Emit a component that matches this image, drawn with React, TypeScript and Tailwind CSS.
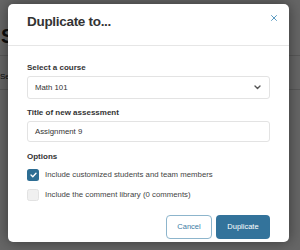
import { X } from "lucide-react";

const DuplicateDialog = () => {
  return (
    <div className="absolute left-[8px] top-[4px] flex h-[238px] w-[281px] flex-col rounded-[5px] bg-white shadow-[0_0_14px_rgba(0,0,0,0.45)]">
      {/* Header */}
      <div className="relative h-[42px] border-b border-[#e6e6e6] pl-[19px] pt-[10px]">
        <h2 className="text-[13.5px] font-bold leading-[16px] tracking-[-0.3px] text-[#333]">
          Duplicate to...
        </h2>
        <button
          aria-label="Close"
          className="absolute right-[10px] top-[9px] text-[#3a87b4]"
        >
          <X size={10} strokeWidth={2} />
        </button>
      </div>

      {/* Body */}
      <div className="flex flex-1 flex-col px-[19px] pt-[17px] text-[#333]">
        <label className="text-[8px] font-bold leading-[10px]">
          Select a course
        </label>
        <div className="mt-[3px] flex h-[23px] items-center justify-between rounded-[3px] border border-[#e3e3e3] pl-[7px] pr-[8px]">
          <span className="text-[7.8px]">Math 101</span>
          <svg width="7" height="5" viewBox="0 0 7 5" fill="none">
            <path
              d="M1 1l2.5 2.5L6 1"
              stroke="#555"
              strokeWidth="1.4"
              strokeLinecap="round"
              strokeLinejoin="round"
            />
          </svg>
        </div>

        <label className="mt-[9px] text-[8px] font-bold leading-[10px]">
          Title of new assessment
        </label>
        <div className="mt-[3px] flex h-[21px] items-center rounded-[3px] border border-[#e3e3e3] pl-[7px]">
          <span className="text-[7.8px]">Assignment 9</span>
        </div>

        <p className="mt-[10px] text-[8px] font-bold leading-[10px]">Options</p>

        <div className="mt-[7px] flex items-center gap-[6px]">
          <span className="flex h-[12px] w-[12px] items-center justify-center rounded-[2.5px] bg-[#2d6d93]">
            <svg width="7" height="6" viewBox="0 0 7 6" fill="none">
              <path
                d="M1 3l1.8 1.8L6 1.3"
                stroke="white"
                strokeWidth="1.3"
                strokeLinecap="round"
                strokeLinejoin="round"
              />
            </svg>
          </span>
          <span className="text-[7.8px] leading-[10px] text-[#444]">
            Include customized students and team members
          </span>
        </div>

        <div className="mt-[8px] flex items-center gap-[6px]">
          <span className="h-[12px] w-[12px] rounded-[2.5px] border border-[#e2e2e2] bg-[#f0f0f0]" />
          <span className="text-[7.8px] leading-[10px] text-[#444]">
            Include the comment library (0 comments)
          </span>
        </div>

        <div className="mt-[14px] flex justify-end gap-[4px]">
          <button className="h-[24px] w-[46px] rounded-[4px] border border-[#8db5cc] bg-white text-[7.5px] text-[#3a7ca5]">
            Cancel
          </button>
          <button className="h-[24px] w-[54px] rounded-[4px] bg-[#33739b] text-[7.5px] text-white">
            Duplicate
          </button>
        </div>
      </div>
    </div>
  );
};

export default function App() {
  return (
    <div
      className="relative h-[250px] w-[300px] overflow-hidden bg-white"
      style={{ fontFamily: '"Liberation Sans", Arial, sans-serif' }}
    >
      {/* Page behind the dialog */}
      <div className="pt-[24px] text-[#222]">
        <div className="w-[8px] overflow-hidden whitespace-nowrap pl-[1px]">
          <h1 className="text-[20px] font-bold leading-[24px]">Se</h1>
        </div>
        <div className="mt-[7px] border-b border-[#ddd]" />
        <div className="mt-[15px] w-[8px] overflow-hidden whitespace-nowrap">
          <p className="text-[8px]">Se</p>
        </div>
        <div className="mt-[6px] border-b border-[#ddd]" />
      </div>

      {/* Backdrop */}
      <div className="absolute inset-0 bg-black/60" />

      <DuplicateDialog />
    </div>
  );
}
